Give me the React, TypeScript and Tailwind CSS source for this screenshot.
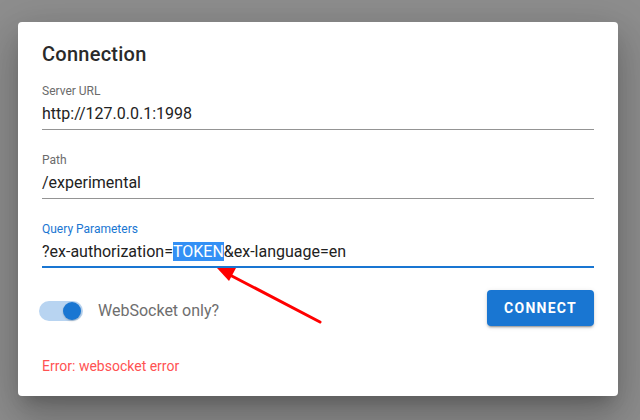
import { ReactNode } from "react";

function Field({
  label,
  active,
  children,
}: {
  label: string;
  active?: boolean;
  children: ReactNode;
}) {
  return (
    <div className="flex flex-col">
      <div className={`text-[12px] leading-[16px] ${active ? "text-[#1976d2]" : "text-[#6b6b6b]"}`}>{label}</div>
      <div
        className={`mt-[3px] text-[16px] leading-[24px] text-[#222] ${
          active ? "pb-[2px] border-b-2 border-[#1976d2]" : "pb-[3px] border-b border-[#949494]"
        }`}
      >
        {children}
      </div>
    </div>
  );
}

export default function App() {
  return (
    <div className="relative w-[640px] h-[420px] overflow-hidden bg-[#8e8e8e] pt-[22px] pl-[18px] font-['Roboto',sans-serif]">
      {/* Dialog card */}
      <div className="w-[600px] h-[374px] bg-white rounded-[4px] pt-[16px] px-[24px] flex flex-col shadow-[0_11px_15px_-7px_rgba(0,0,0,0.2),0_24px_38px_3px_rgba(0,0,0,0.14),0_9px_46px_8px_rgba(0,0,0,0.12)]">
        <h2 className="text-[20px] leading-[32px] font-medium text-[#2a2a2a] tracking-[0.25px]">Connection</h2>

        <div className="mt-[13px] flex flex-col gap-[22px]">
          <Field label="Server URL">http://127.0.0.1:1998</Field>
          <Field label="Path">/experimental</Field>
          <Field label="Query Parameters" active>
            ?ex-authorization=<span className="bg-[#3390f5] text-white">TOKEN</span>&amp;ex-language=en
          </Field>
        </div>

        {/* Switch + connect */}
        <div className="mt-[22px] flex items-start justify-between">
          <div className="pt-[11px] -ml-[3px] flex items-center gap-[15px]">
            <div className="w-[44px] h-[20px] rounded-full bg-[#b8d4f1] flex items-center justify-end pr-[2px]">
              <div className="w-[18px] h-[18px] rounded-full bg-[#1976d2] shadow-[0_1px_2px_rgba(0,0,0,0.2)]" />
            </div>
            <span className="text-[16px] leading-[20px] text-[#6e6e6e]">WebSocket only?</span>
          </div>
          <button className="w-[107px] h-[36px] rounded-[4px] bg-[#1976d2] text-white text-[14px] font-bold tracking-[1.25px] shadow-[0_3px_1px_-2px_rgba(0,0,0,0.2),0_2px_2px_0_rgba(0,0,0,0.14),0_1px_5px_0_rgba(0,0,0,0.12)]">
            CONNECT
          </button>
        </div>

        <div className="mt-[30px] text-[14px] leading-[20px] text-[#ff5252]">Error: websocket error</div>
      </div>

      {/* Annotation arrow */}
      <svg className="absolute left-0 top-0" width="640" height="420" viewBox="0 0 640 420">
        <line x1="320" y1="322" x2="228" y2="274" stroke="#ff0000" strokeWidth="3" strokeLinecap="round" />
        <polygon points="217,268 236,268 229,281" fill="#ff0000" />
      </svg>
    </div>
  );
}
